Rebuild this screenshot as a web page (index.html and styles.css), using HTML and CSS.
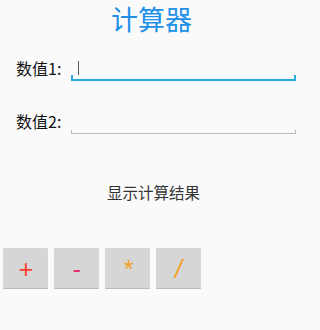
FILE: index.html
```html
<!DOCTYPE html>
<html>
<head>
<meta charset="utf-8">
<link rel="stylesheet" href="styles.css">
</head>
<body>
<div class="app">
  <h1 class="title">计算器</h1>
  <div class="row row1">
    <span class="label">数值1:</span>
    <div class="field active"><span class="cursor"></span></div>
  </div>
  <div class="row row2">
    <span class="label">数值2:</span>
    <div class="field"></div>
  </div>
  <div class="result">显示计算结果</div>
  <div class="buttons">
    <div class="btn plus">+</div>
    <div class="btn minus">-</div>
    <div class="btn times">*</div>
    <div class="btn divide">/</div>
  </div>
</div>
</body>
</html>
```
FILE: styles.css
```css
html, body {
  margin: 0;
  padding: 0;
  background: #fafafa;
}
.app {
  width: 303px;
  height: 330px;
  font-family: "Noto Sans CJK SC", "Noto Sans", sans-serif;
  display: flex;
  flex-direction: column;
}
.title {
  margin: 0;
  padding-top: 2px;
  height: 36px;
  font-size: 27px;
  line-height: 34px;
  font-weight: normal;
  color: #1e90e8;
  text-align: center;
}
.row {
  display: flex;
  align-items: flex-end;
  padding-left: 16px;
  padding-right: 7px;
}
.row1 {
  margin-top: 19px;
}
.row2 {
  margin-top: 30px;
}
.label {
  width: 55px;
  font-size: 16px;
  line-height: 20px;
  color: #111;
  padding-bottom: 3px;
}
.field {
  flex: 1;
  height: 22px;
  position: relative;
  border-bottom: 1px solid #bdbdbd;
}
.field::before, .field::after {
  content: "";
  position: absolute;
  bottom: 0;
  width: 1px;
  height: 3px;
  background: #bdbdbd;
}
.field::before { left: 0; }
.field::after { right: 0; }
.field.active {
  border-bottom: 2px solid #2aa8e0;
}
.field.active::before, .field.active::after {
  width: 2px;
  height: 4px;
  background: #2aa8e0;
}
.cursor {
  position: absolute;
  left: 7px;
  top: 4px;
  width: 1px;
  height: 14px;
  background: #555;
}
.result {
  margin-top: 48px;
  text-align: center;
  font-size: 15.5px;
  line-height: 20px;
  color: #333;
  padding-left: 4px;
}
.buttons {
  display: flex;
  gap: 6px;
  margin-top: 46px;
  padding-left: 3px;
}
.btn {
  width: 45px;
  height: 40px;
  background: #d6d6d6;
  border-bottom: 1px solid #b8b8b8;
  border-radius: 1px;
  display: flex;
  align-items: center;
  justify-content: center;
  padding-top: 2px;
  box-sizing: content-box;
  height: 38px;
  font-family: "Liberation Sans", sans-serif;
  font-style: italic;
  font-size: 25px;
}
.plus { color: #ff3b2f; }
.minus { color: #e8336b; }
.times { color: #f5a023; }
.divide { color: #f5a023; }
```
